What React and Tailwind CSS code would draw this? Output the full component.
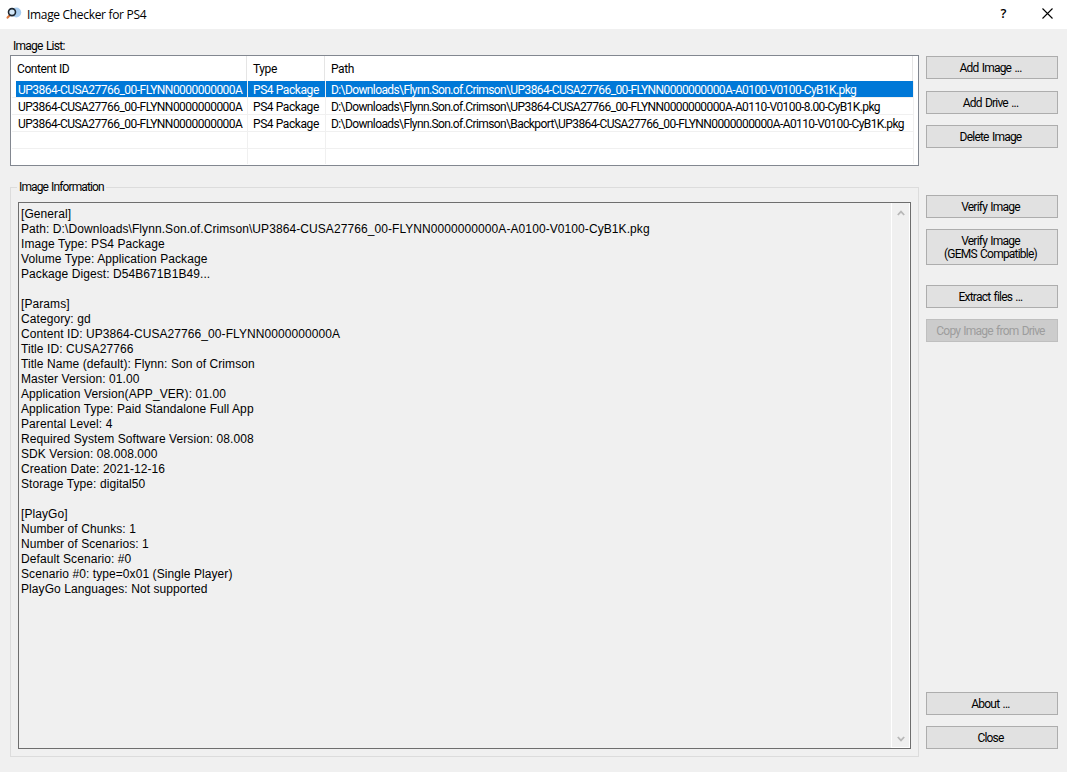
import React from "react";

const images = [
  {
    id: "UP3864-CUSA27766_00-FLYNN0000000000A",
    type: "PS4 Package",
    path: "D:\\Downloads\\Flynn.Son.of.Crimson\\UP3864-CUSA27766_00-FLYNN0000000000A-A0100-V0100-CyB1K.pkg",
    selected: true,
  },
  {
    id: "UP3864-CUSA27766_00-FLYNN0000000000A",
    type: "PS4 Package",
    path: "D:\\Downloads\\Flynn.Son.of.Crimson\\UP3864-CUSA27766_00-FLYNN0000000000A-A0110-V0100-8.00-CyB1K.pkg",
  },
  {
    id: "UP3864-CUSA27766_00-FLYNN0000000000A",
    type: "PS4 Package",
    path: "D:\\Downloads\\Flynn.Son.of.Crimson\\Backport\\UP3864-CUSA27766_00-FLYNN0000000000A-A0110-V0100-CyB1K.pkg",
  },
  { id: "", type: "", path: "" },
];

const info = [
  "[General]",
  "Path: D:\\Downloads\\Flynn.Son.of.Crimson\\UP3864-CUSA27766_00-FLYNN0000000000A-A0100-V0100-CyB1K.pkg",
  "Image Type: PS4 Package",
  "Volume Type: Application Package",
  "Package Digest: D54B671B1B49...",
  "",
  "[Params]",
  "Category: gd",
  "Content ID: UP3864-CUSA27766_00-FLYNN0000000000A",
  "Title ID: CUSA27766",
  "Title Name (default): Flynn: Son of Crimson",
  "Master Version: 01.00",
  "Application Version(APP_VER): 01.00",
  "Application Type: Paid Standalone Full App",
  "Parental Level: 4",
  "Required System Software Version: 08.008",
  "SDK Version: 08.008.000",
  "Creation Date: 2021-12-16",
  "Storage Type: digital50",
  "",
  "[PlayGo]",
  "Number of Chunks: 1",
  "Number of Scenarios: 1",
  "Default Scenario: #0",
  "Scenario #0: type=0x01 (Single Player)",
  "PlayGo Languages: Not supported",
];

const Button = ({ children, className = "", disabled }) => (
  <button
    disabled={disabled}
    className={`flex w-[132px] shrink-0 items-center justify-center border pt-[2px] pr-[3px] text-center leading-[13px] tracking-[-0.78px] [word-spacing:1px] ${
      disabled
        ? "border-[#bfbfbf] bg-[#cccccc] text-[#9d9d9d]"
        : "border-[#adadad] bg-[#e1e1e1] text-black"
    } ${className || "h-[23px]"}`}
  >
    {children}
  </button>
);

const TitleBar = () => (
  <header className="flex h-[29px] shrink-0 items-center bg-white pl-[6px] font-['Open_Sans',sans-serif] text-[12px] tracking-[-0.32px]">
    <svg width="16" height="16" viewBox="0 0 16 16" className="mr-[5px] mb-[2px]">
      <circle cx="10.3" cy="6.5" r="4.9" fill="#a9cdf0" />
      <path d="M3.6 9.5 1.6 11.6" stroke="#d9783f" strokeWidth="2.2" strokeLinecap="round" />
      <circle cx="6" cy="6.1" r="3.5" fill="#d3e7f8" stroke="#1c2630" strokeWidth="1.6" />
    </svg>
    <h1 className="grow">Image Checker for PS4</h1>
    <span className="mr-[36px] mb-[2px] text-[13px] font-semibold">?</span>
    <svg width="11" height="11" viewBox="0 0 11 11" className="mr-[14px] mb-[3px]">
      <path d="M.5.5l10 10M10.5.5l-10 10" stroke="#000" strokeWidth="1.1" />
    </svg>
  </header>
);

const ImageList = () => (
  <section className="flex h-[111px] w-[909px] flex-col border border-[#828790] bg-white">
    <div className="flex h-[25px] shrink-0 items-center tracking-[-0.4px]">
      <div className="flex h-full w-[236px] items-center border-r border-[#e5e5e5] pt-px pl-[6px]">Content ID</div>
      <div className="flex h-full w-[78px] items-center border-r border-[#e5e5e5] pt-px pl-[6px]">Type</div>
      <div className="flex h-full w-[588px] items-center border-r border-[#e5e5e5] pt-px pl-[6px]">Path</div>
    </div>
    {images.map((row, i) => (
      <div
        key={i}
        className={`ml-[1px] flex h-[17px] w-[902px] border-b border-[#f0f0f0] leading-[19px] whitespace-nowrap ${
          row.selected ? "text-white" : "text-black"
        }`}
      >
        <div className="w-[236px] border-r border-[#f0f0f0] pl-[4px]">
          <div className={`h-full pl-[2px] tracking-[-0.53px] ${row.selected ? "bg-[#0078d7]" : ""}`}>{row.id}</div>
        </div>
        <div className={`w-[78px] border-r border-[#f0f0f0] pl-[5px] tracking-[-0.42px] ${row.selected ? "bg-[#0078d7]" : ""}`}>
          {row.type}
        </div>
        <div className={`w-[588px] border-r border-[#f0f0f0] pl-[5px] tracking-[-0.6px] ${row.selected ? "bg-[#0078d7]" : ""}`}>
          {row.path}
        </div>
      </div>
    ))}
    <div className="ml-[1px] flex h-[15px] w-[902px]">
      <div className="w-[236px] border-r border-[#f0f0f0]" />
      <div className="w-[78px] border-r border-[#f0f0f0]" />
      <div className="w-[588px] border-r border-[#f0f0f0]" />
    </div>
  </section>
);

const Chevron = ({ down }) => (
  <svg width="8" height="6" viewBox="0 0 8 6" className={down ? "rotate-180" : ""}>
    <path d="M.8 5 4 1.6 7.2 5" fill="none" stroke="#b8b8b8" strokeWidth="1.8" />
  </svg>
);

const ImageInformation = () => (
  <fieldset className="mt-[14px] flex h-[577px] w-[909px] flex-col border border-[#dcdcdc] pl-[7px]">
    <legend className="-ml-[1px] h-[14px] px-[2px] leading-[14px] tracking-[-0.88px] [word-spacing:1px]">
      Image Information
    </legend>
    <div className="mt-[8px] flex h-[547px] w-[893px] justify-between border border-[#6e6e6e]">
      <div className="pt-[4px] pl-[2px] font-['Liberation_Sans',Arial,sans-serif] text-[12px] leading-[15px] tracking-[0.08px] whitespace-pre">
        {info.map((line, i) => (
          <p key={i} className="h-[15px]">
            {line}
          </p>
        ))}
      </div>
      <div className="flex w-[19px] flex-col items-center justify-between border-x border-b border-white pt-[7px] pb-[5px]">
        <Chevron />
        <Chevron down />
      </div>
    </div>
  </fieldset>
);

const App = () => {
  return (
    <div className="flex h-[772px] w-[1067px] flex-col overflow-hidden bg-[#f0f0f0] font-[Roboto,sans-serif] text-[12px] text-black">
      <TitleBar />
      <main className="flex grow pl-[10px]">
        <div className="w-[909px]">
          <p className="h-[26px] pt-[10px] pl-[3px] leading-[14px] tracking-[-0.75px] [word-spacing:1px]">Image List:</p>
          <ImageList />
          <ImageInformation />
        </div>
        <aside className="flex flex-col pt-[27px] pl-[7px]">
          <Button>Add Image ...</Button>
          <Button className="mt-[12px] h-[23px]">Add Drive ...</Button>
          <Button className="mt-[11px] h-[23px]">Delete Image</Button>
          <Button className="mt-[47px] h-[23px]">Verify Image</Button>
          <Button className="mt-[11px] h-[36px]">
            <span>
              Verify Image
              <br />
              (GEMS Compatible)
            </span>
          </Button>
          <Button className="mt-[20px] h-[23px]">Extract files ...</Button>
          <Button className="mt-[11px] h-[23px]" disabled>
            Copy Image from Drive
          </Button>
          <Button className="mt-[350px] h-[23px]">About ...</Button>
          <Button className="mt-[11px] h-[23px]">Close</Button>
        </aside>
      </main>
    </div>
  );
};

export default App;
